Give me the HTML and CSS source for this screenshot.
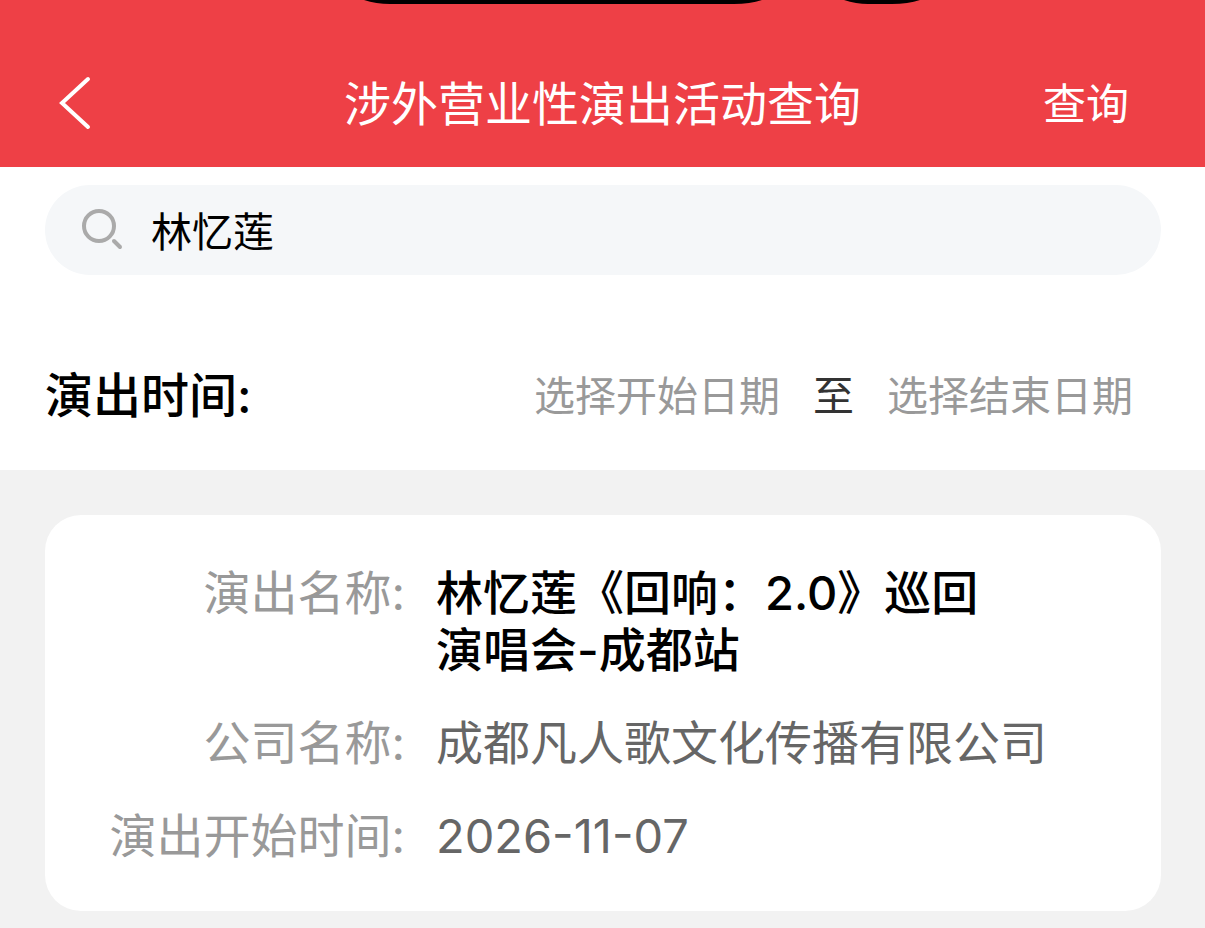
FILE: index.html
```html
<!DOCTYPE html>
<html lang="zh-CN">
<head>
<meta charset="utf-8">
<meta name="viewport" content="width=device-width, initial-scale=1">
<title>涉外营业性演出活动查询</title>
<link rel="stylesheet" href="styles.css">
</head>
<body>
<header class="navbar">
  <svg class="cutout" width="570" height="5" viewBox="0 0 570 5" aria-hidden="true"><path d="M4 0Q16 4 30 4H374Q390 4 402 0ZM484 0Q496 4 508 4H532Q548 4 560 0Z"/></svg>
  <button class="back" type="button" aria-label="返回"><svg width="34" height="56" viewBox="0 0 34 56"><path d="M30 3 4 27 30 51"/></svg></button>
  <h1 class="title">涉外营业性演出活动查询</h1>
  <button class="submit" type="button">查询</button>
</header>
<section class="filters">
  <label class="search">
    <svg width="44" height="44" viewBox="0 0 44 44" aria-hidden="true"><circle cx="18" cy="19" r="15"/><path d="m33 34 6 6"/></svg>
    <input type="text" value="林忆莲" aria-label="搜索">
  </label>
  <div class="period">
    <h2 class="period-label">演出时间:</h2>
    <div class="range">
      <button type="button" class="date">选择开始日期</button>
      <span class="to">至</span>
      <button type="button" class="date">选择结束日期</button>
    </div>
  </div>
</section>
<main class="results">
  <dl class="card">
    <dt>演出名称:</dt><dd class="name">林忆莲《回响：2.0》巡回<br>演唱会-成都站</dd>
    <dt>公司名称:</dt><dd>成都凡人歌文化传播有限公司</dd>
    <dt>演出开始时间:</dt><dd>2026-11-07</dd>
  </dl>
</main>
</body>
</html>
```

FILE: styles.css
```css
* { box-sizing: border-box; }
body {
  margin: 0;
  min-height: 100vh;
  background: #f2f2f2;
  color: #000;
  font-family: Inter, "Noto Sans CJK SC", sans-serif;
}
button { border: 0; padding: 0; background: none; font: inherit; color: inherit; }
svg { display: block; fill: none; stroke-linecap: round; }
.navbar {
  position: relative;
  display: grid;
  grid-template-columns: 1fr auto 1fr;
  align-items: center;
  padding: 72px 58px 31px;
  background: #ee4046;
  color: #fff;
}
.cutout { position: absolute; top: 0; left: 360px; fill: #000; }
.back { justify-self: start; stroke: #fff; stroke-width: 4; }
.title { margin: 0; font-size: 47px; font-weight: 400; line-height: 64px; }
.submit { justify-self: end; padding-right: 18px; font-size: 43px; line-height: 64px; }
.filters { padding: 18px 44px 0 45px; background: #fff; }
.search {
  display: flex;
  align-items: center;
  gap: 26px;
  padding: 13px 36px 15px;
  border-radius: 45px;
  background: #f5f7f9;
}
.search svg { flex: none; stroke: #aaa; stroke-width: 4; }
.search input {
  flex: 1;
  min-width: 0;
  height: 62px;
  border: 0;
  padding: 0;
  outline: 0;
  background: none;
  color: #000;
  font: inherit;
  font-size: 41px;
}
.period {
  display: flex;
  align-items: center;
  justify-content: space-between;
  padding: 89px 28px 42px 0;
}
.period-label { margin: 0; font-size: 48px; font-weight: 500; line-height: 64px; }
.range { display: flex; align-items: center; gap: 33px; font-size: 41px; line-height: 64px; color: #333; }
.date { color: #999; }
.results { padding: 45px 44px 17px 45px; }
.card {
  display: grid;
  grid-template-columns: 360px 1fr;
  column-gap: 31px;
  row-gap: 36px;
  margin: 0;
  padding: 49px 60px 47px 0;
  border-radius: 36px;
  background: #fff;
  font-size: 47px;
  line-height: 57px;
}
.card dt { text-align: right; color: #999; }
.card dd { margin: 0; color: #666; }
.card .name { color: #000; font-weight: 500; }
```
